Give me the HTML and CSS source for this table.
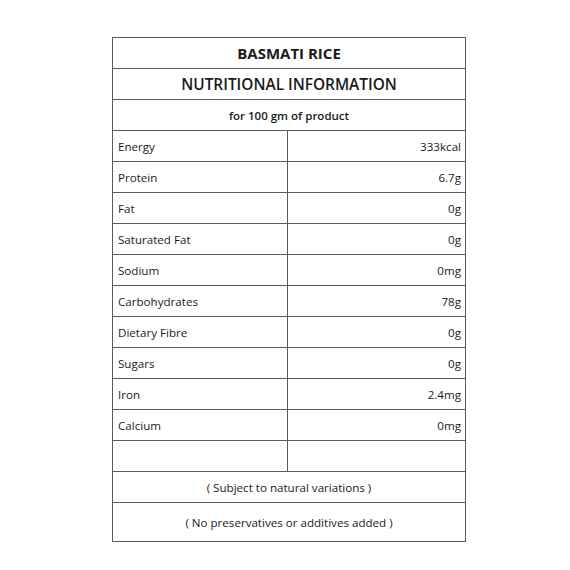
FILE: index.html
```html
<!DOCTYPE html>
<html>
<head>
<meta charset="utf-8">
<link rel="stylesheet" href="styles.css">
</head>
<body>
<div class="panel">
  <div class="row head title">BASMATI RICE</div>
  <div class="row head subtitle">NUTRITIONAL INFORMATION</div>
  <div class="row head per">for 100 gm of product</div>
  <div class="row"><div class="name">Energy</div><div class="val">333kcal</div></div>
  <div class="row"><div class="name">Protein</div><div class="val">6.7g</div></div>
  <div class="row"><div class="name">Fat</div><div class="val">0g</div></div>
  <div class="row"><div class="name">Saturated Fat</div><div class="val">0g</div></div>
  <div class="row"><div class="name">Sodium</div><div class="val">0mg</div></div>
  <div class="row"><div class="name">Carbohydrates</div><div class="val">78g</div></div>
  <div class="row"><div class="name">Dietary Fibre</div><div class="val">0g</div></div>
  <div class="row"><div class="name">Sugars</div><div class="val">0g</div></div>
  <div class="row"><div class="name">Iron</div><div class="val">2.4mg</div></div>
  <div class="row"><div class="name">Calcium</div><div class="val">0mg</div></div>
  <div class="row"><div class="name"></div><div class="val"></div></div>
  <div class="row note">( Subject to natural variations )</div>
  <div class="row note last">( No preservatives or additives added )</div>
</div>
</body>
</html>
```
FILE: styles.css
```css
html, body {
  margin: 0;
  padding: 0;
  background: #ffffff;
}
body {
  padding: 37px 0 0 112px;
  font-family: "Open Sans", "Noto Sans", sans-serif;
  color: #1a1a1a;
}
.panel {
  box-sizing: border-box;
  width: 354px;
  border: 1px solid #5a5a5a;
}
.row {
  display: flex;
  height: 30px;
  border-bottom: 1px solid #5a5a5a;
  font-size: 11.6px;
}
.row:last-child {
  border-bottom: none;
}
.head, .note {
  justify-content: center;
  align-items: center;
}
.title {
  font-size: 15px;
  font-weight: 700;
}
.subtitle {
  font-size: 15.4px;
  font-weight: 600;
}
.per {
  font-size: 11.5px;
  font-weight: 600;
}
.name {
  box-sizing: border-box;
  width: 175px;
  flex: none;
  border-right: 1px solid #5a5a5a;
  display: flex;
  align-items: center;
  padding-left: 5px;
}
.val {
  flex: 1;
  display: flex;
  align-items: center;
  justify-content: flex-end;
  padding-right: 4px;
}
.note {
  font-size: 11.6px;
}
.last {
  height: 38px;
}
```
